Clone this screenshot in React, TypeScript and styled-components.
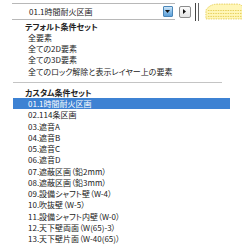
import React from "react";
import styled, { createGlobalStyle } from "styled-components";

const Global = createGlobalStyle`
  html, body { margin: 0; padding: 0; background: #fff; }
  body {
    font-family: "Noto Sans CJK JP", "Noto Sans", sans-serif;
    font-size: 8px;
    color: #222;
    font-feature-settings: "palt";
  }
`;

const Page = styled.div`
  width: 242px;
  height: 244px;
  overflow: hidden;
  display: flex;
  flex-direction: column;
`;

const Toolbar = styled.div`
  height: 20.5px;
  box-sizing: border-box;
  padding-top: 3px;
  flex: none;
  display: flex;
  align-items: center;
  padding-left: 12px;
  gap: 4px;
`;

const Combo = styled.div`
  width: 165px;
  height: 17px;
  box-sizing: border-box;
  border-top: 1px solid #b8b8b8;
  border-bottom: 1px solid #b8b8b8;
  display: flex;
  align-items: center;
`;

const ComboText = styled.span`
  flex: 1;
  padding-left: 17px;
  line-height: 1;
`;

const DropBtn = styled.div`
  width: 10px;
  height: 11px;
  box-sizing: border-box;
  border: 1px solid #4a86b8;
  border-radius: 1px;
  background: linear-gradient(#cfe6f8, #8dc0ea 50%, #5ea0d8);
  display: flex;
  align-items: center;
  justify-content: center;
  margin-right: 2px;
`;

const SmallBtn = styled.div`
  width: 12px;
  height: 12px;
  box-sizing: border-box;
  border: 1px solid #8c8c8c;
  border-radius: 2px;
  background: linear-gradient(#fbfbfb, #e4e4e4);
  display: flex;
  align-items: center;
  justify-content: center;
`;

const DoubleRule = styled.div`
  width: 4px;
  height: 18px;
  box-sizing: border-box;
  border-left: 1px solid #444;
  border-right: 1px solid #666;
`;

const List = styled.div`
  display: flex;
  flex-direction: column;
`;

const Header = styled.div`
  height: 11.25px;
  line-height: 11.25px;
  padding-left: 25px;
  font-weight: 700;
  white-space: nowrap;
`;

const Item = styled.div<{ $active?: boolean }>`
  height: 11.25px;
  line-height: 11.25px;
  margin-left: 13px;
  width: 217px;
  padding-left: 15px;
  box-sizing: border-box;
  white-space: nowrap;
  background: ${(p) => (p.$active ? "#3d82d3" : "transparent")};
  color: ${(p) => (p.$active ? "#fff" : "#222")};
`;

const Separator = styled.div`
  margin: 5.5px 20px 3.5px 13px;
  height: 1px;
  background: #c4c4c4;
`;

const defaults = [
  "全要素",
  "全ての2D要素",
  "全ての3D要素",
  "全てのロック解除と表示レイヤー上の要素",
];

const customs = [
  "01.1時間耐火区画",
  "02.114条区画",
  "03.遮音A",
  "04.遮音B",
  "05.遮音C",
  "06.遮音D",
  "07.遮蔽区画（鉛2mm）",
  "08.遮蔽区画（鉛3mm）",
  "09.設備シャフト壁（W-4）",
  "10.吹抜壁（W-5）",
  "11.設備シャフト内壁（W-0）",
  "12.天下壁両面（W(65)-3）",
  "13.天下壁片面（W-40(65)）",
];

const LayersIcon = () => (
  <svg width="40" height="17" viewBox="0 0 40 17">
    <path d="M3 7 Q7 1 15 1 L34 1 Q40 1 40 5 L40 16 L3 16 Z" fill="#fff6b8" stroke="#e6cf5a" strokeWidth="1" strokeDasharray="1.5 1" />
    <line x1="5" y1="7.5" x2="40" y2="7.5" stroke="#e6cf5a" strokeDasharray="1.5 1" />
    <line x1="5" y1="10.5" x2="40" y2="10.5" stroke="#e6cf5a" strokeDasharray="1.5 1" />
    <line x1="5" y1="13.5" x2="40" y2="13.5" stroke="#e6cf5a" strokeDasharray="1.5 1" />
  </svg>
);

export default function App() {
  return (
    <Page>
      <Global />
      <Toolbar>
        <Combo>
          <ComboText>01.1時間耐火区画</ComboText>
          <DropBtn>
            <svg width="5" height="3" viewBox="0 0 5 3">
              <path d="M0 0 H5 L2.5 3 Z" fill="#111" />
            </svg>
          </DropBtn>
        </Combo>
        <SmallBtn>
          <svg width="3" height="5" viewBox="0 0 3 5">
            <path d="M0 0 V5 L3 2.5 Z" fill="#111" />
          </svg>
        </SmallBtn>
        <DoubleRule />
        <LayersIcon />
      </Toolbar>
      <List>
        <Header>テフォルト条件セット</Header>
        {defaults.map((t) => (
          <Item key={t}>{t}</Item>
        ))}
        <Separator />
        <Header>カスタム条件セット</Header>
        {customs.map((t, i) => (
          <Item key={t} $active={i === 0}>
            {t}
          </Item>
        ))}
      </List>
    </Page>
  );
}
